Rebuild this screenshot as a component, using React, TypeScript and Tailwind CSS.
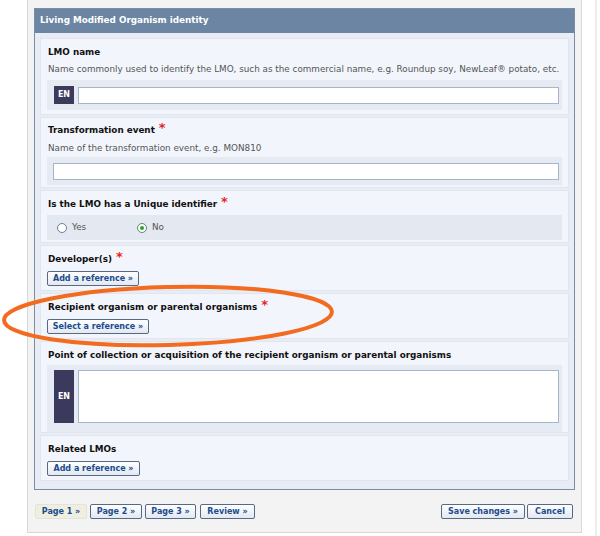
import React from "react";

const Star = () => (
  <span className="relative top-[-3px] ml-[4px] text-[13px] leading-none font-bold text-[#e3262b]">*</span>
);

const Title = ({ children, req }: { children: React.ReactNode; req?: boolean }) => (
  <div className="h-[14px] leading-[14px] pl-[1px] font-bold text-[#111] whitespace-nowrap flex items-center">
    <span>{children}</span>
    {req && <Star />}
  </div>
);

const Desc = ({ children, cls }: { children: React.ReactNode; cls: string }) => (
  <div className={"h-[14px] leading-[14px] pl-[1px] text-[#555] whitespace-nowrap " + cls}>{children}</div>
);

const Btn = ({ children, w, active }: { children: React.ReactNode; w: string; active?: boolean }) => (
  <div
    className={
      "h-[15px] rounded-[2px] border flex items-center justify-center font-bold text-[8px] leading-none text-[#1b4c8c] whitespace-nowrap " +
      w +
      (active
        ? " border-[#e4e4d6] bg-[#efefe1]"
        : " border-[#566a86] bg-linear-to-b from-white to-[#e3e8f1]")
    }
  >
    {children}
  </div>
);

const Section = ({ children, cls }: { children: React.ReactNode; cls: string }) => (
  <div className={"bg-[#f2f5fb] border border-[#e1e6ee] px-[6px] flex flex-col " + cls}>{children}</div>
);

const Badge = () => (
  <div className="w-[20px] shrink-0 bg-[#3b3a5c] text-white text-[8px] font-bold flex items-center justify-center">EN</div>
);

export default function App() {
  return (
    <div className="relative w-[600px] h-[536px] bg-white overflow-hidden font-['DejaVu_Sans',Verdana,sans-serif] text-[8.8px]">
      <div className="flex h-full">
        <div className="w-[27px] shrink-0" />
        <div className="w-[555px] h-[533px] shrink-0 bg-[#f3f3f3] border-x border-b border-[#d8d8d8] px-[6px] pt-[8px] flex flex-col">
          {/* panel */}
          <div className="border border-[#7b8da6] flex flex-col">
            <div className="h-[24px] bg-[#6b85a2] px-[5px] flex items-center text-white font-bold whitespace-nowrap">
              Living Modified Organism identity
            </div>
            <div className="bg-[#e8ecf4] pt-[5px] px-[5px] pb-[8px] flex flex-col gap-[2px]">
              {/* S1 */}
              <Section cls="pt-[6px] pb-[4px]">
                <Title>LMO name</Title>
                <Desc cls="mt-[3px]">
                  Name commonly used to identify the LMO, such as the commercial name, e.g. Roundup soy, NewLeaf® potato, etc.
                </Desc>
                <div className="mt-[4px] bg-[#e6ebf3] pl-[7px] pr-[3px] py-[6px] flex gap-[4px]">
                  <div className="h-[18px] flex w-full gap-[4px]">
                    <Badge />
                    <div className="flex-1 mt-[1px] h-[17px] border border-[#a7b5c9] bg-white" />
                  </div>
                </div>
              </Section>
              {/* S2 */}
              <Section cls="pt-[5px] pb-[2px]">
                <Title req>Transformation event</Title>
                <Desc cls="mt-[4px]">Name of the transformation event, e.g. MON810</Desc>
                <div className="mt-[2px] bg-[#e6ebf3] pl-[6px] pr-[3px] pt-[6px] pb-[5px]">
                  <div className="h-[17px] border border-[#a7b5c9] bg-white" />
                </div>
              </Section>
              {/* S3 */}
              <Section cls="pt-[6px] pb-[2px]">
                <Title req>Is the LMO has a Unique identifier</Title>
                <div className="mt-[4px] h-[25px] bg-[#e3e8f1] pl-[10px] flex items-center text-[#555]">
                  <div className="w-[80px] flex items-center gap-[5px]">
                    <span className="w-[10px] h-[10px] rounded-full border border-[#6b7e98] bg-white" />
                    <span>Yes</span>
                  </div>
                  <div className="flex items-center gap-[5px]">
                    <span className="w-[10px] h-[10px] rounded-full border border-[#5f8a6a] bg-white flex items-center justify-center">
                      <span className="w-[4px] h-[4px] rounded-full bg-[#2fa035]" />
                    </span>
                    <span>No</span>
                  </div>
                </div>
              </Section>
              {/* S4 */}
              <Section cls="pt-[6px] pb-[4px]">
                <Title req>Developer(s)</Title>
                <div className="mt-[5px] flex">
                  <Btn w="w-[92px]">Add a reference »</Btn>
                </div>
              </Section>
              {/* S5 */}
              <Section cls="pt-[6px] pb-[4px]">
                <Title req>Recipient organism or parental organisms</Title>
                <div className="mt-[5px] flex">
                  <Btn w="w-[102px]">Select a reference »</Btn>
                </div>
              </Section>
              {/* S6 */}
              <Section cls="pt-[6px] pb-[0px]">
                <Title>Point of collection or acquisition of the recipient organism or parental organisms</Title>
                <div className="mt-[3px] bg-[#e6ebf3] pl-[7px] pr-[3px] pt-[5px] pb-[9px]">
                  <div className="h-[53px] flex gap-[4px]">
                    <Badge />
                    <div className="flex-1 border border-[#a7b5c9] bg-white" />
                  </div>
                </div>
              </Section>
              {/* S7 */}
              <Section cls="pt-[6px] pb-[4px]">
                <Title>Related LMOs</Title>
                <div className="mt-[5px] flex">
                  <Btn w="w-[93px]">Add a reference »</Btn>
                </div>
              </Section>
            </div>
          </div>
          {/* bottom buttons */}
          <div className="mt-[14px] pl-[1px] pr-[2px] flex justify-between">
            <div className="flex">
              <Btn w="w-[52px]" active>Page 1 »</Btn>
              <div className="ml-[3px]"><Btn w="w-[52px]">Page 2 »</Btn></div>
              <div className="ml-[3px]"><Btn w="w-[51px]">Page 3 »</Btn></div>
              <div className="ml-[4px]"><Btn w="w-[55px]">Review »</Btn></div>
            </div>
            <div className="flex gap-[2px]">
              <Btn w="w-[84px]">Save changes »</Btn>
              <Btn w="w-[46px]">Cancel</Btn>
            </div>
          </div>
        </div>
        <div className="ml-[13px] w-[2px] h-full bg-[#ececec]" />
      </div>
      <svg className="absolute left-0 top-[280px]" width="340" height="75" viewBox="0 0 340 75">
        <ellipse cx="168" cy="36" rx="164" ry="29" fill="none" stroke="#f26b1e" strokeWidth="4" transform="rotate(-1.5 168 36)" />
      </svg>
    </div>
  );
}
